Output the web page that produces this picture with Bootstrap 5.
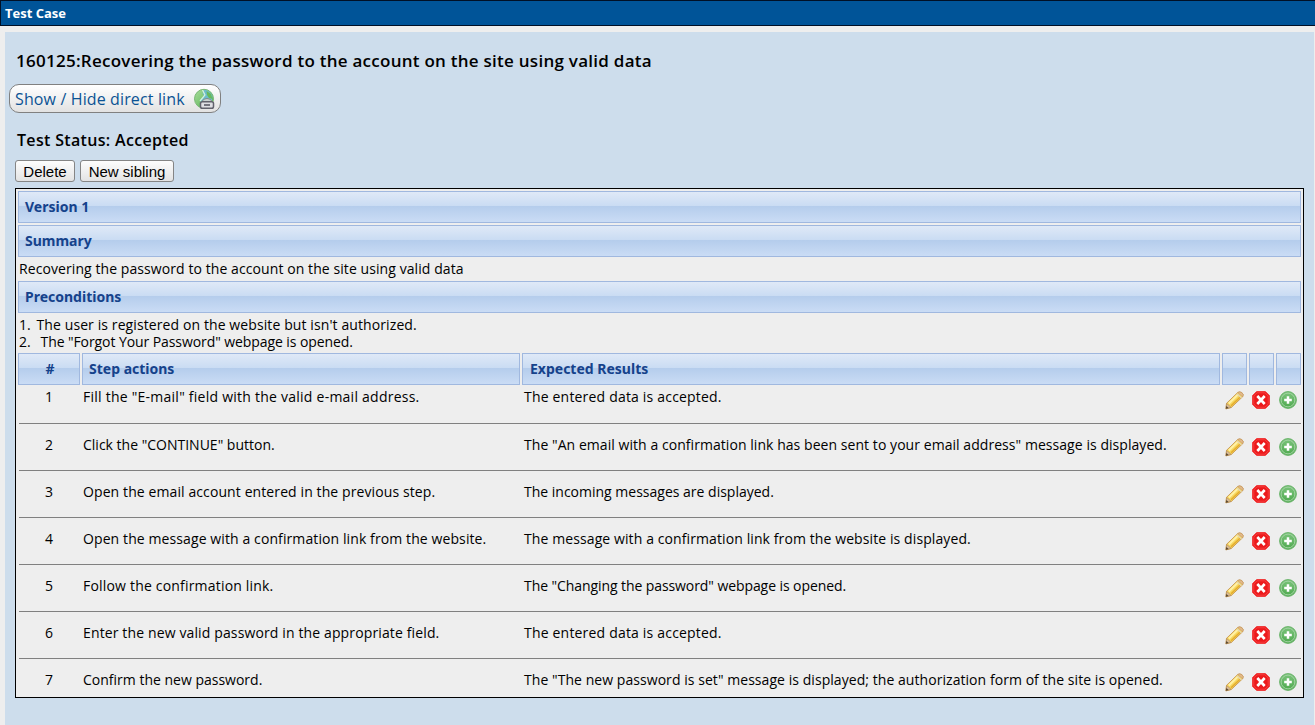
<!DOCTYPE html>
<html lang="en">
<head>
<meta charset="utf-8">
<meta name="viewport" content="width=device-width, initial-scale=1">
<title>Test Case</title>
<link href="https://cdn.jsdelivr.net/npm/bootstrap@5.3.0/dist/css/bootstrap.min.css" rel="stylesheet">
<style>
body{background:#eee;color:#000;font-family:"Trebuchet MS","Open Sans",sans-serif;font-size:14px;line-height:17px;overflow:hidden}
.titlebar{height:26px;background:#005498;border:1px solid #001026;border-right:0;color:#fff;font-size:13px;font-weight:700;line-height:24px;padding-left:4px}
.workpane{margin:6px 1px 0 5px;height:693px;background:#cdddec;padding:0 10px}
.case-title{font-size:17px;font-weight:600;line-height:24px;letter-spacing:.26px;margin:0;padding:17px 0 0 1px;white-space:nowrap}
.link-btn{height:29px;width:212px;margin:11px 0 0 -6px;padding:0 5px;border:1px solid #808080;border-radius:10px;background:linear-gradient(#fff,#e2e2e2);color:#0b5394;font-size:16px;letter-spacing:.13px;line-height:26px;white-space:nowrap}
.case-status{font-size:16px;font-weight:600;line-height:24px;letter-spacing:.33px;margin:15px 0 8px 2px}
.tool-btns{gap:5px}
.tool-btn{height:22px;border:1px solid #858585;border-radius:3px;background:linear-gradient(#fdfdfd,#e3e3e3);color:#000;font:15px/18px "Liberation Sans",sans-serif;padding:1px 0 0}
.tool-btn.delete{width:60px}
.tool-btn.sibling{width:94px}
.sheet{width:1289px;height:510px;border:1px solid #000;background:#eee;margin-top:6px;padding:2px}
.strip{height:32px;border:1px solid #a0b8df;background:linear-gradient(#dfe9f7 0,#cadcf3 46%,#b5cdec 48%,#cadcf5 100%);color:#15428b;font-family:Tahoma,"Noto Sans",sans-serif;font-size:14px;font-weight:700;line-height:29px;padding-left:6px}
.strip+.strip.under{margin-top:2px}
.strip.results{padding-left:7px}
.strip.number{padding-left:2px}
.note{padding:3px 0 0 1px}
.note.short{height:24px;letter-spacing:.08px}
.note.tall{height:40px}
.num{display:inline-block;width:17.5px}
.num.wide{width:21.5px}
.steps{display:grid;grid-template-columns:62px 438px 698px 25px 25px 25px;column-gap:2px}
.step-row{grid-template-columns:61px 438px 698px 25px 25px 25px;height:47px;border-top:1px solid #808080;margin-left:1px}
.step-row>div{padding:12px 0 0 1px;white-space:nowrap}
.step-row>div:first-child{text-align:center;padding-right:2px}
.step-row>div:nth-child(3){padding-left:2px}
.step-row>.ico{padding:14px 0 0 3px}
.step-row>.ico svg{display:block}
.step-row:first-child{border-top:0;height:38px}
.step-row:first-child>div{padding-top:3px}
.step-row:first-child>.ico{padding-top:6px}
.step-row:last-child{height:38px}
.tm{letter-spacing:-.08px}
.t1{letter-spacing:.055px}
.t2{letter-spacing:.1px}
.t3{letter-spacing:.13px}
.t4{letter-spacing:.19px}
.t5{letter-spacing:.245px}
</style>
</head>
<body>
<svg width="0" height="0" class="position-absolute" aria-hidden="true">
<defs>
<linearGradient id="leaf" x1="0" y1="0" x2="0" y2="1"><stop offset="0" stop-color="#7cc47c"/><stop offset="1" stop-color="#4ea94e"/></linearGradient>
<linearGradient id="land" x1="0" y1="0" x2="1" y2="1"><stop offset="0" stop-color="#a9dd9b"/><stop offset="1" stop-color="#4fae4c"/></linearGradient>
<symbol id="i-pencil" viewBox="0 0 20 20"><path d="M.9 18.8 1.6 13 13.4 1.6Q15 .3 17.6 1.6 20.1 3.6 18.6 6L6.6 17.4Z" fill="#f7d65c" stroke="#c99a52" stroke-width="1"/><path d="M4 13.2 13.4 4" stroke="#fff0a4" stroke-width="2.2"/><path d="M6.4 15.6 16 6.4" stroke="#e3ab2e" stroke-width="1.5"/><path d="m13.4 1.6 5.2 4.6Q20.1 3.6 17.6 1.6 15 .3 13.4 1.6Z" fill="#e2b98c" stroke="#c39660" stroke-width=".6"/><path d="m12.6 2.8 4.8 4.5" stroke="#e4d6b0" stroke-width="1.4"/><path d="m1.8 13.2 4.7 4-5.4 1.5Z" fill="#d9bd97" stroke="#b0854f" stroke-width=".6"/><path d="m1.4 15.9 2.4 2-2.9.9Z" fill="#574631"/></symbol>
<symbol id="i-delete" viewBox="0 0 18 18"><path d="M4.6.6h8.8l4 4v8.8l-4 4H4.6l-4-4V4.6Z" fill="#ec1a1c" stroke="#f03636" stroke-width="1"/><path d="M5.1 1.8h7.8l3.3 3.3v7.8l-3.3 3.3H5.1l-3.3-3.3V5.1Z" fill="none" stroke="#fa4a4a" stroke-width=".7"/><path d="m5.3 5 7.4 8m0-8-7.4 8" stroke="#fff" stroke-width="2.6"/></symbol>
<symbol id="i-add" viewBox="0 0 18 18"><circle cx="9" cy="9" r="8.4" fill="url(#leaf)" stroke="#6cb46c" stroke-width="1"/><circle cx="9" cy="9" r="6.9" fill="none" stroke="#a3d3a3" stroke-width="1"/><path d="M9 5.2v7.6M5.2 9h7.6" stroke="#fff" stroke-width="2.5"/></symbol>
<symbol id="i-globe" viewBox="0 0 22 22"><circle cx="11" cy="10.8" r="9.5" fill="url(#land)" stroke="#79b774" stroke-width="1"/><path d="M11 1.8Q17 2 19.4 8L19 13H11L8 15 7 12 11 8 9.500 5Z" fill="#6cbccb"/><path d="M13.500 3 18 6 19.500 11 16 10 14 7Z" fill="#66b95c"/><path d="M9.500 2 12 7 7 13" fill="none" stroke="#d5f2df" stroke-width="1.2"/><path d="M9.500 14V12.500q4.500-4 9 0V14" fill="#c9d2d0" stroke="#808b8b" stroke-width="1"/><rect x="7.500" y="13.800" width="13" height="6.400" rx="1.800" fill="#dedee3" stroke="#62626d" stroke-width="1.5"/><path d="M11 17h6" stroke="#62626d" stroke-width="1.7"/></symbol>
</defs>
</svg>

<header class="titlebar">Test Case</header>
<main class="workpane">
<h1 class="case-title">160125:Recovering the password to the account on the site using valid data</h1>
<button type="button" class="link-btn d-flex align-items-center justify-content-between">Show / Hide direct link<svg width="22" height="22"><use href="#i-globe"/></svg></button>
<h2 class="case-status">Test Status: Accepted</h2>
<div class="tool-btns d-flex"><button class="tool-btn delete" type="button">Delete</button><button class="tool-btn sibling" type="button">New sibling</button></div>
<section class="sheet">
<div class="strip">Version 1</div>
<div class="strip under">Summary</div>
<div class="note short">Recovering the password to the account on the site using valid data</div>
<div class="strip">Preconditions</div>
<div class="note tall"><div class="t2"><span class="num">1.</span>The user is registered on the website but isn't authorized.</div><div class="tm"><span class="num wide">2.</span>The "Forgot Your Password" webpage is opened.</div></div>
<div class="steps"><div class="strip number text-center">#</div><div class="strip">Step actions</div><div class="strip results">Expected Results</div><div class="strip"></div><div class="strip"></div><div class="strip"></div></div>
<div id="rows"></div>
</section>
</main>
<script>
const steps = [
  ['Fill the "E-mail" field with the valid e-mail address.', 't5', 'The entered data is accepted.', 't4'],
  ['Click the "CONTINUE" button.', '', 'The "An email with a confirmation link has been sent to your email address" message is displayed.', 't1'],
  ['Open the email account entered in the previous step.', 't2', 'The incoming messages are displayed.', ''],
  ['Open the message with a confirmation link from the website.', 't2', 'The message with a confirmation link from the website is displayed.', 't2'],
  ['Follow the confirmation link.', 't4', 'The "Changing the password" webpage is opened.', 'tm'],
  ['Enter the new valid password in the appropriate field.', 't3', 'The entered data is accepted.', 't4'],
  ['Confirm the new password.', '', 'The "The new password is set" message is displayed; the authorization form of the site is opened.', 't1']
];
const icon = (name, w) => `<div class="ico"><svg width="${w}" height="${w}"><use href="#i-${name}"/></svg></div>`;
document.getElementById('rows').innerHTML = steps.map((s, i) =>
  `<div class="steps step-row"><div>${i + 1}</div><div class="${s[1]}">${s[0]}</div><div class="${s[3]}">${s[2]}</div>${icon('pencil', 19)}${icon('delete', 18)}${icon('add', 18)}</div>`).join('');
</script>
<script src="https://cdn.jsdelivr.net/npm/bootstrap@5.3.0/dist/js/bootstrap.bundle.min.js"></script>
</body>
</html>
